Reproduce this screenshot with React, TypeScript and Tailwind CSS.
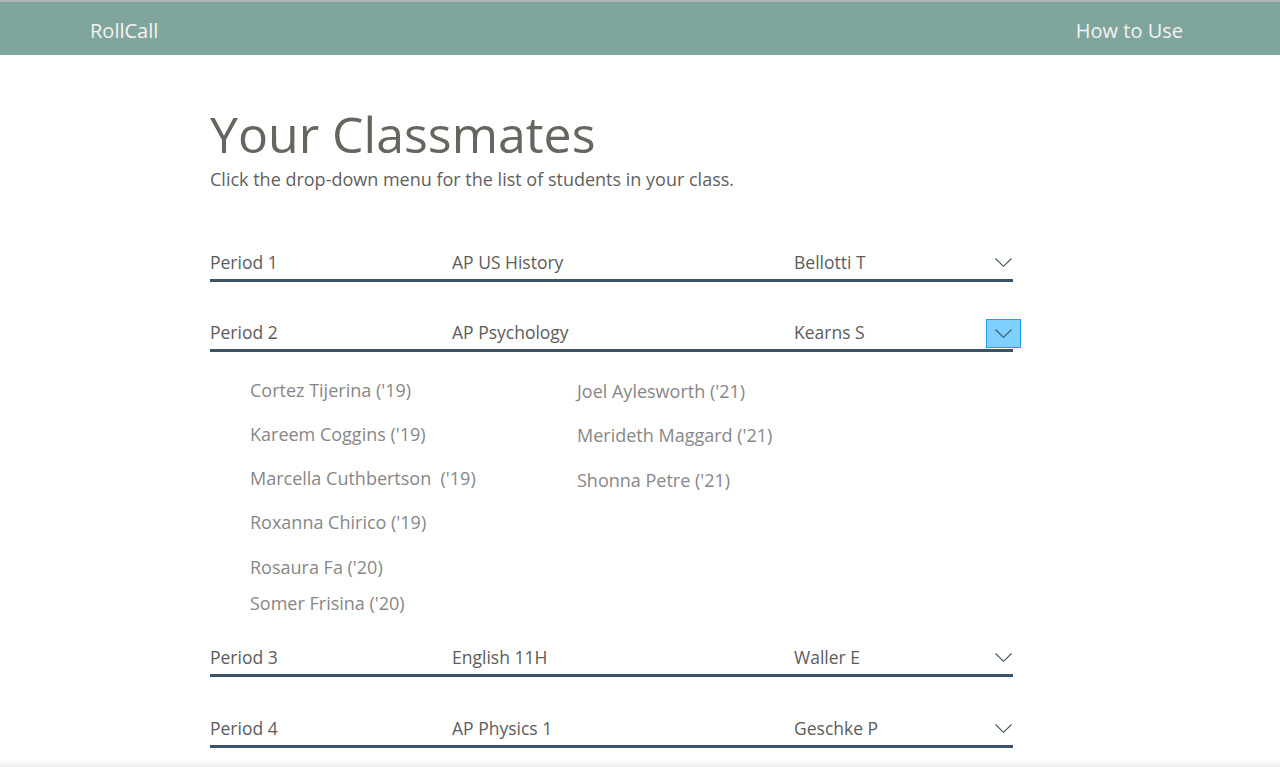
const rows = [
  { period: "Period 1", course: "AP US History", teacher: "Bellotti T", open: false },
  { period: "Period 2", course: "AP Psychology", teacher: "Kearns S", open: true },
  { period: "Period 3", course: "English 11H", teacher: "Waller E", open: false },
  { period: "Period 4", course: "AP Physics 1", teacher: "Geschke P", open: false },
];

const rowGap: Record<string, string> = {
  "Period 1": "",
  "Period 2": "mt-[38px]",
  "Period 3": "mt-[30px]",
  "Period 4": "mt-[39px]",
};

const leftStudents = [
  { name: "Cortez Tijerina ('19)", cls: "" },
  { name: "Kareem Coggins ('19)", cls: "mt-5" },
  { name: "Marcella Cuthbertson  ('19)", cls: "mt-5" },
  { name: "Roxanna Chirico ('19)", cls: "mt-5" },
  { name: "Rosaura Fa ('20)", cls: "mt-[21px]" },
  { name: "Somer Frisina ('20)", cls: "mt-3" },
];

const rightStudents = [
  { name: "Joel Aylesworth ('21)", cls: "" },
  { name: "Merideth Maggard ('21)", cls: "mt-5" },
  { name: "Shonna Petre ('21)", cls: "mt-[21px]" },
];

const Chevron = () => (
  <svg width="17" height="9" viewBox="0 0 17 9" fill="none">
    <path d="M0.5 0.5 L8.5 8.3 L16.5 0.5" stroke="#3d5366" strokeWidth="1.1" />
  </svg>
);

const Row = ({ row }: { row: (typeof rows)[number] }) => (
  <div className="relative flex items-center border-b-[3px] border-[#3c5266] pb-[5px] text-[17.5px] leading-6 text-[#5c5c5c]">
    <span className="w-[242px]">{row.period}</span>
    <span className="w-[342px]">{row.course}</span>
    <span className="flex-1">{row.teacher}</span>
    {row.open ? (
      <div className="absolute right-[-8px] top-[-1px] flex h-[29px] w-[35px] items-center justify-center border border-[#20a2e2] bg-[#7fd0ff]">
        <Chevron />
      </div>
    ) : (
      <span className="mr-[1px] flex items-center">
        <Chevron />
      </span>
    )}
  </div>
);

export default function App() {
  return (
    <div className="min-h-[767px] bg-white font-['Open_Sans',sans-serif]">
      {/* Header */}
      <header className="flex h-[55px] items-center justify-between border-t-2 border-[#b3b3b3] bg-[#80a59d] pt-1 pl-[90px] pr-[97px] text-[20px] text-[#f3f3f3]">
        <span>RollCall</span>
        <span>How to Use</span>
      </header>

      <main className="ml-[210px] w-[803px] pt-[47px]">
        <h1 className="text-[50px] leading-[64px] text-[#66665e]">Your Classmates</h1>
        <p className="mt-[1px] text-[18px] leading-6 text-[#5f5f5f]">
          Click the drop-down menu for the list of students in your class.
        </p>

        <div className="mt-[59px] flex flex-col">
          {rows.map((row) => (
            <div key={row.period} className={rowGap[row.period]}>
              <Row row={row} />
              {row.open && (
                <div className="flex pt-[26px] pl-10 text-[18px] leading-6 text-[#878787]">
                  <div className="flex w-[327px] flex-col">
                    {leftStudents.map((s) => (
                      <span key={s.name} className={`whitespace-pre ${s.cls}`}>
                        {s.name}
                      </span>
                    ))}
                  </div>
                  <div className="flex flex-col pt-[1px]">
                    {rightStudents.map((s) => (
                      <span key={s.name} className={s.cls}>
                        {s.name}
                      </span>
                    ))}
                  </div>
                </div>
              )}
            </div>
          ))}
        </div>
      </main>

      {/* bottom fold shadow */}
      <div className="pointer-events-none fixed bottom-0 left-0 h-[8px] w-full bg-gradient-to-b from-white to-[#ececec]" />
    </div>
  );
}
